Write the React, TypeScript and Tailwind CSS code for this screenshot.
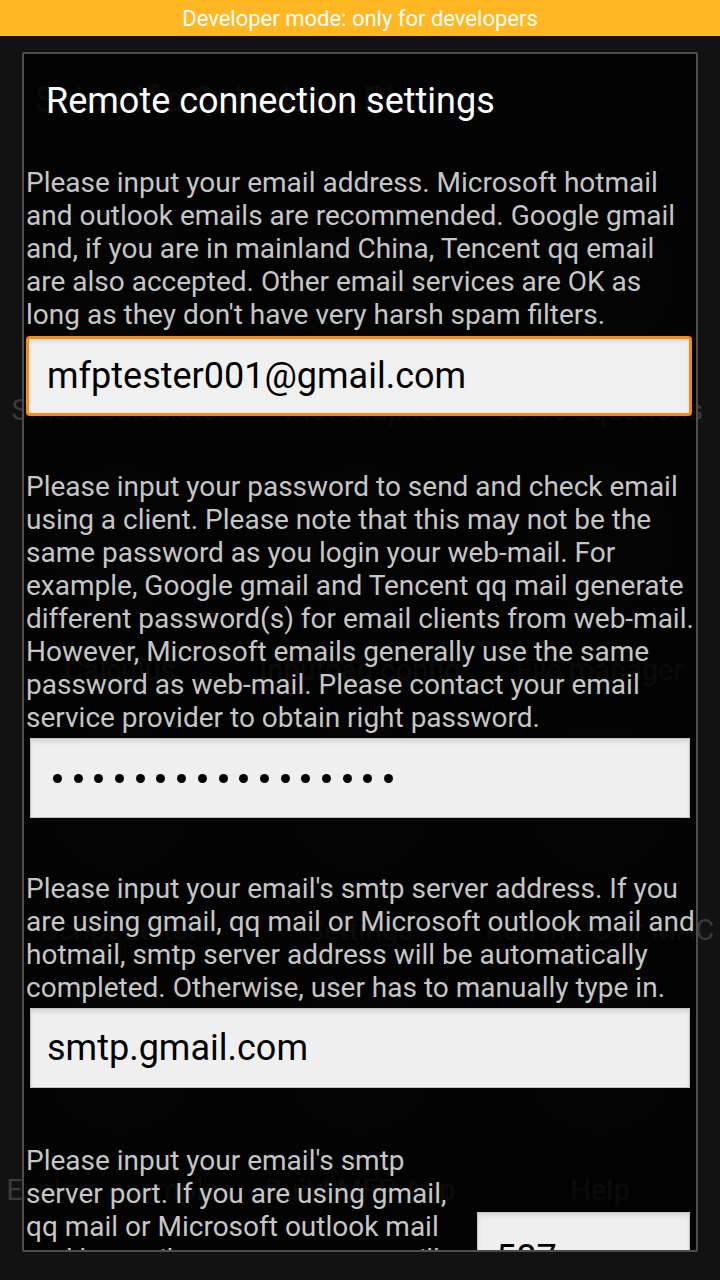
import React from 'react';

// ─── Ghost app behind the dialog ──────────────────────────────────────────────

const GHOST_ROWS: string[][] = [
  ['Smart Calculator', 'Plot Graphs', 'Solve Equations'],
  ['Calculus', 'Inputpad config', 'File manager'],
  ['Script Editor', 'Settings', 'Run in PC or MAC'],
  ['Explore examples', 'Build MFP App', 'Help'],
];

const GhostApp = () => (
  <div className="flex flex-col text-[#3a3a3a]">
    <div className="h-[134px] pl-[35px] pt-[44px] text-[36px] leading-[40px]">Scientific Calculator Plus</div>
    {GHOST_ROWS.map((row, i) => (
      <div key={i} className="grid grid-cols-[240px_240px_240px] h-[260px]">
        {row.map((label) => (
          <div key={label} className="flex flex-col items-center justify-end pb-[4px]">
            <div className="w-[150px] h-[150px] mb-[40px] rounded-full bg-[#161616]" />
            <span className="text-[29px] leading-[32px] whitespace-nowrap">{label}</span>
          </div>
        ))}
      </div>
    ))}
  </div>
);

// ─── Dialog bits ──────────────────────────────────────────────────────────────

const Hint = ({ children, className = '' }: { children: React.ReactNode; className?: string }) => (
  <p className={`text-[28px] leading-[33px] text-[#c6c6c6] pl-[2px] ${className}`}>{children}</p>
);

const Field = ({ children, className = '' }: { children?: React.ReactNode; className?: string }) => (
  <div
    className={`h-[80px] bg-[#efefef] border border-[#c4c4c4] shadow-[inset_0_3px_4px_rgba(0,0,0,0.10)] flex items-center pl-[16px] text-[36px] text-black ${className}`}
  >
    {children}
  </div>
);

export default function App() {
  return (
    <div
      className="w-[720px] h-[1280px] bg-[#121212] flex flex-col overflow-hidden"
      style={{ fontFamily: 'Roboto, "Noto Sans", sans-serif' }}
    >
      {/* Top bar */}
      <div className="h-[36px] shrink-0 bg-[#ffb824] flex items-center justify-center text-white text-[22px]">
        Developer mode: only for developers
      </div>

      <div className="relative flex-1">
        <GhostApp />

        {/* Dialog */}
        <div className="absolute left-[22px] right-[22px] top-[16px] bottom-[28px] border-2 border-[#4d4d4d] rounded-[2px] bg-black/80 overflow-hidden">
          <h1 className="pl-[22px] pt-[27px] text-[36px] leading-[40px] text-white">Remote connection settings</h1>

          <div className="mt-[45px] w-[671px]">
            <Hint>
              Please input your email address. Microsoft hotmail and outlook emails are recommended. Google gmail
              and, if you are in mainland China, Tencent qq email are also accepted. Other email services are OK as
              long as they don't have very harsh spam filters.
            </Hint>
            <div className="mt-[5px] ml-[2px] w-[666px] h-[80px] rounded-[4px] border-[3px] border-[#fb8a12] bg-[#f0f0f0] shadow-[inset_0_3px_4px_rgba(0,0,0,0.08)] flex items-center pl-[18px] text-[36px] text-black">
              mfptester001@gmail.com
            </div>

            <Hint className="mt-[54px]">
              Please input your password to send and check email using a client. Please note that this may not be
              the same password as you login your web-mail. For example, Google gmail and Tencent qq mail generate
              different password(s) for email clients from web-mail. However, Microsoft emails generally use the same
              password as web-mail. Please contact your email service provider to obtain right password.
            </Hint>
            <Field className="mt-[4px] ml-[6px] w-[660px] pl-[22px]">
              <div className="flex gap-[11.7px]">
                {Array.from({ length: 17 }).map((_, i) => (
                  <span key={i} className="w-[9px] h-[9px] rounded-full bg-black" />
                ))}
              </div>
            </Field>

            <Hint className="mt-[54px]">
              Please input your email's smtp server address. If you are using gmail, qq mail or Microsoft outlook mail
              and hotmail, smtp server address will be automatically completed. Otherwise, user has to manually type
              in.
            </Hint>
            <Field className="mt-[4px] ml-[6px] w-[660px]">smtp.gmail.com</Field>

            <div className="mt-[56px] flex">
              <Hint className="w-[446px] shrink-0">
                Please input your email's smtp server port. If you are using gmail, qq mail or Microsoft outlook mail
                and hotmail, smtp server port will be automatically completed.
              </Hint>
              <Field className="mt-[68px] ml-[7px] w-[213px] items-start pt-[18px] pl-[18px]">587</Field>
            </div>
          </div>
        </div>
      </div>
    </div>
  );
}
